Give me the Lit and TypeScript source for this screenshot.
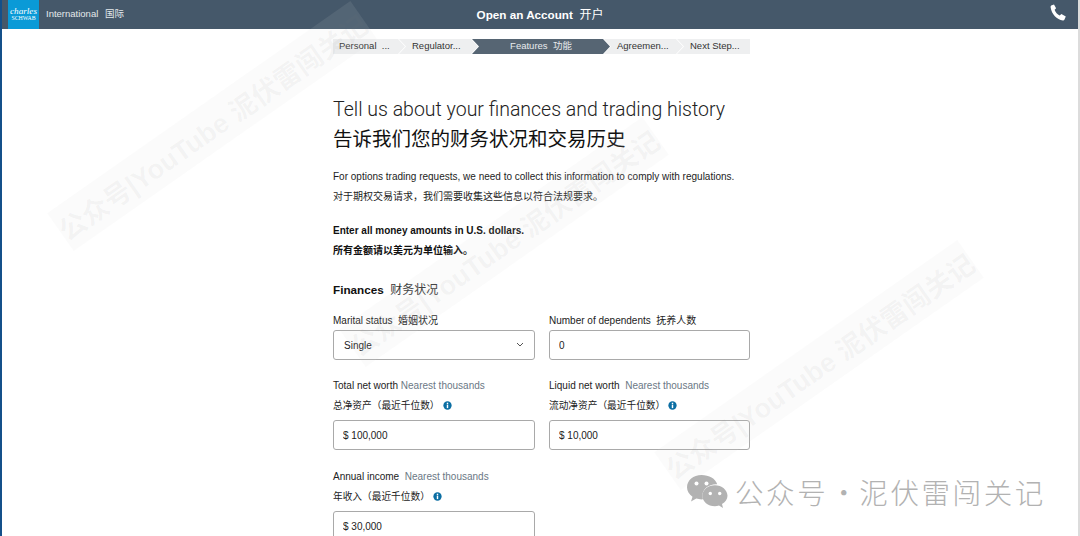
import { LitElement, html, css } from "lit";
import { customElement } from "lit/decorators.js";

const info = html`<svg class="info" viewBox="0 0 10 10" aria-hidden="true"><circle cx="5" cy="5" r="4.6" fill="#0b6ea3"/><rect x="4.2" y="1.9" width="1.6" height="1.5" fill="#fff"/><rect x="4.2" y="4" width="1.6" height="3.9" fill="#fff"/></svg>`;

@customElement("app-root")
export class AppRoot extends LitElement {
  static styles = css`
    :host {
      display: block;
      position: relative;
      width: 1080px;
      height: 536px;
      overflow: hidden;
      background: #fff;
      box-sizing: border-box;
      border-left: 2px solid #14508a;
      border-right: 2px solid #dcdcdc;
      font-family: "Liberation Sans", "Noto Sans CJK SC", sans-serif;
      color: #1d1d1d;
    }
    header {
      display: grid;
      grid-template-columns: 1fr auto 1fr;
      align-items: center;
      height: 29px;
      background: #45586a;
      color: #fff;
    }
    .brand { display: flex; align-items: center; height: 29px; padding-left: 6px; }
    .logo {
      width: 31px;
      height: 100%;
      background: #0a9ad7;
      display: flex;
      flex-direction: column;
      align-items: center;
      justify-content: center;
      font-family: "Liberation Serif", serif;
      line-height: 1;
      color: #fff;
      padding-bottom: 2px;
      box-sizing: border-box;
    }
    .logo i { font-size: 9.2px; line-height: 8px; }
    .logo b { font-size: 5.8px; line-height: 6px; font-weight: 400; }
    .intl { margin: 0 0 3px 7px; font-size: 9.5px; color: #e4e8eb; word-spacing: 4px; }
    .title { font-size: 11.7px; font-weight: 700; white-space: pre; margin-bottom: 3px; }
    .title span { font-weight: 400; font-size: 12px; }
    .phone { justify-self: end; margin: 0 11px 4px 0; display: block; width: 17px; height: 17px; }
    main { width: 417px; margin-left: 331px; }
    .steps { display: flex; height: 15px; margin-top: 10px; font-size: 9.5px; line-height: 14px; }
    .step {
      background: #eeeff0;
      color: #333;
      white-space: pre;
      margin-right: -6px;
      clip-path: polygon(0 0, calc(100% - 7px) 0, 100% 50%, calc(100% - 7px) 100%, 0 100%, 7px 50%);
      box-sizing: border-box;
      padding-left: 13px;
    }
    .step:first-child { clip-path: polygon(0 0, calc(100% - 7px) 0, 100% 50%, calc(100% - 7px) 100%, 0 100%); padding-left: 6px; }
    .step:last-child { clip-path: polygon(0 0, 100% 0, 100% 100%, 0 100%, 7px 50%); margin-right: 0; }
    .step.on { background: #566573; color: #e8ebee; padding-left: 0; text-align: center; }
    h1 {
      margin: 42px 0 0;
      font-weight: 300;
      font-size: 19.5px;
      line-height: 28px;
      color: #222;
      font-family: "Roboto", "Noto Sans CJK SC", sans-serif;
      white-space: nowrap;
    }
    h1 .zh { display: block; font-weight: 400; font-size: 19.5px; color: #111; font-family: "Noto Sans CJK SC", sans-serif; }
    p { margin: 0; font-size: 10px; line-height: 20px; white-space: nowrap; }
    .intro { margin-top: 15px; }
    .bold { margin-top: 14px; font-weight: 700; color: #111; }
    h2 { margin: 19px 0 0; font-size: 11.7px; line-height: 20px; font-weight: 700; color: #111; white-space: pre; }
    h2 span { font-weight: 400; font-size: 12px; color: #333; }
    .grid {
      display: grid;
      grid-template-columns: 202px 201px;
      column-gap: 14px;
      row-gap: 16px;
      margin-top: 11px;
    }
    label { display: block; font-size: 10px; line-height: 19px; white-space: pre; color: #222; }
    label em { font-style: normal; color: #6b7885; }
    .zh-label { display: flex; align-items: center; gap: 3px; font-size: 9.7px; margin: 1px 0 5px; }
    .info { width: 9px; height: 9px; display: block; }
    .field { position: relative; }
    .field.last { margin-top: 1px; }
    .control {
      display: block;
      width: 100%;
      height: 30px;
      margin: 0;
      box-sizing: border-box;
      padding: 0 9px;
      border: 1px solid #a9a9a9;
      border-radius: 3px;
      background: #fff;
      font: 10px "Liberation Sans", sans-serif;
      color: #222;
      appearance: none;
      outline: none;
    }
    select.control { padding-left: 10px; }
    .chev { position: absolute; right: 11px; bottom: 13px; width: 8px; height: 5px; pointer-events: none; }
    .band {
      position: absolute;
      width: 370px;
      height: 46px;
      margin: -23px 0 0 -185px;
      transform: rotate(-35deg);
      background: rgba(215, 215, 215, 0.1);
      color: rgba(130, 130, 130, 0.07);
      font: 700 27px "Liberation Sans", "Noto Sans CJK SC", sans-serif;
      display: flex;
      align-items: center;
      justify-content: center;
      white-space: nowrap;
      pointer-events: none;
    }
    .wm {
      position: absolute;
      left: 684px;
      top: 473px;
      display: flex;
      align-items: center;
      gap: 7px;
      color: #b2b2b2;
      font: 300 28.5px "Noto Sans CJK SC", sans-serif;
      letter-spacing: 2.6px;
      line-height: 38px;
      white-space: pre;
      pointer-events: none;
    }
    .wm svg { width: 42px; height: 36px; display: block; }
    .dot { display: inline-block; width: 31px; text-align: center; letter-spacing: 0; }
  `;

  render() {
    return html`
      <header>
        <div class="brand">
          <div class="logo"><i>charles</i><b>SCHWAB</b></div>
          <span class="intl">International 国际</span>
        </div>
        <div class="title">Open an Account  <span>开户</span></div>
        <svg class="phone" viewBox="0 0 17 17" aria-hidden="true">
          <path fill="#fff" d="M1.2 1.6 4 .4l2.1 3.9-1.5 1.5c.8 2.5 2.8 4.7 5.1 5.7l1.7-1.5 4.4 2.6-1.3 2.9c-.3.6-.9 1-1.6.9C6.9 15.7 1.6 10.2.6 3.2c-.1-.7.1-1.3.6-1.6z"/>
        </svg>
      </header>
      <main>
        <div class="steps">
          <div class="step" style="width:72px">Personal  ...</div>
          <div class="step" style="width:79px">Regulator...</div>
          <div class="step on" style="width:138px">Features  功能</div>
          <div class="step" style="width:79px">Agreemen...</div>
          <div class="step" style="width:73px">Next Step...</div>
        </div>
        <h1>Tell us about your finances and trading history<span class="zh">告诉我们您的财务状况和交易历史</span></h1>
        <p class="intro">For options trading requests, we need to collect this information to comply with regulations.<br />对于期权交易请求，我们需要收集这些信息以符合法规要求。</p>
        <p class="bold">Enter all money amounts in U.S. dollars.<br />所有金额请以美元为单位输入。</p>
        <h2>Finances  <span>财务状况</span></h2>
        <div class="grid">
          <div class="field">
            <label>Marital status  婚姻状况</label>
            <select class="control"><option>Single</option></select>
            <svg class="chev" viewBox="0 0 8 5" aria-hidden="true"><path d="M1 1l3 3 3-3" fill="none" stroke="#555" stroke-width="1"/></svg>
          </div>
          <div class="field">
            <label>Number of dependents  抚养人数</label>
            <input class="control" value="0" />
          </div>
          <div class="field">
            <label>Total net worth <em>Nearest thousands</em></label>
            <label class="zh-label">总净资产（最近千位数）${info}</label>
            <input class="control" value="$ 100,000" />
          </div>
          <div class="field">
            <label>Liquid net worth  <em>Nearest thousands</em></label>
            <label class="zh-label">流动净资产（最近千位数）${info}</label>
            <input class="control" value="$ 10,000" />
          </div>
          <div class="field last">
            <label>Annual income  <em>Nearest thousands</em></label>
            <label class="zh-label">年收入（最近千位数）${info}</label>
            <input class="control" value="$ 30,000" />
          </div>
        </div>
      </main>
      <div class="band" style="left:210px;top:126px">公众号|YouTube 泥伏雷闯关记</div>
      <div class="band" style="left:502px;top:242px">公众号|YouTube 泥伏雷闯关记</div>
      <div class="band" style="left:817px;top:365px">公众号|YouTube 泥伏雷闯关记</div>
      <div class="wm">
        <svg viewBox="0 0 42 36" aria-hidden="true">
          <path fill="#b2b2b2" d="M15.5 1C7.4 1 1 6.4 1 13.2c0 3.9 2.1 7.2 5.5 9.5L5 27.5l5.3-2.9c1.7.5 3.4.8 5.2.8.5 0 1 0 1.5-.1-.4-1.2-.6-2.4-.6-3.7 0-6.3 6-11.4 13.5-11.4h1.3C29.6 4.7 23.1 1 15.5 1z"/>
          <path fill="#b2b2b2" d="M41.5 21.7c0-5.8-5.7-10.5-12.6-10.5s-12.6 4.7-12.6 10.5 5.7 10.500 12.600 10.500c1.400 0 2.800-.2 4.100-.6L37 34l-1-3.900c3.300-2 5.500-4.900 5.500-8.400z"/>
          <circle cx="10.5" cy="9.5" r="2" fill="#fff"/><circle cx="20.5" cy="9.5" r="2" fill="#fff"/>
          <circle cx="24.3" cy="19.5" r="1.7" fill="#fff"/><circle cx="33.7" cy="19.5" r="1.7" fill="#fff"/>
        </svg>
        <span>公众号<span class="dot">·</span>泥伏雷闯关记</span>
      </div>
    `;
  }
}
